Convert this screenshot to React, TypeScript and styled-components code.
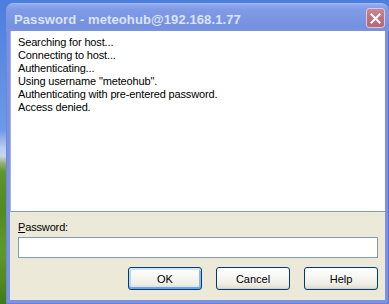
import React from "react";
import styled, { createGlobalStyle } from "styled-components";

const Global = createGlobalStyle`
  html, body { margin: 0; padding: 0; }
  body {
    width: 389px;
    height: 304px;
    overflow: hidden;
    background: linear-gradient(to bottom,
      #4d7edd 0px, #5b8ae2 60px, #6d9ae8 130px, #b9cdee 148px, #c6d6ee 156px,
      #8fae6a 164px, #5f9430 172px, #4f8a22 210px, #5e9a2a 250px, #4a8420 290px, #3f7a18 304px);
    font-family: "Liberation Sans", Tahoma, sans-serif;
  }
`;

const Desktop = styled.div`
  width: 389px;
  height: 304px;
  padding: 3px 0 0 6px;
  box-sizing: border-box;
  display: flex;
`;

const Window = styled.div`
  flex: 1;
  display: flex;
  flex-direction: column;
  background: #7b92e2;
  border-radius: 7px 7px 0 0;
  box-shadow: inset -1px 0 0 #5d73cc, inset 1px 0 0 #6f86dc, inset 0 -1px 0 #6a80d8;
  overflow: hidden;
`;

const TitleBar = styled.div`
  height: 28px;
  flex: none;
  display: flex;
  align-items: flex-start;
  justify-content: space-between;
  padding: 0 4px 0 8px;
  box-sizing: border-box;
  background: linear-gradient(to bottom, #a9bff2 0px, #8ea9ec 2px, #809ce6 6px, #7b96e2 14px, #7590df 24px, #7a94e0 28px);
  border-radius: 7px 7px 0 0;
`;

const Title = styled.span`
  font-family: "Liberation Sans", "DejaVu Sans", sans-serif;
  font-weight: bold;
  font-size: 13px;
  color: #dbe4f8;
  margin-top: 9px;
  line-height: 15px;
  letter-spacing: 0.1px;
`;

const CloseButton = styled.div`
  width: 19px;
  height: 20px;
  margin-top: 5px;
  border-radius: 3px;
  border: 1px solid #e4c6d0;
  box-sizing: border-box;
  background: linear-gradient(to bottom, #c98694, #bb6e7e 60%, #b56877);
  display: flex;
  align-items: center;
  justify-content: center;
`;

const Body = styled.div`
  flex: 1;
  display: flex;
  flex-direction: column;
  margin: 0 4px 4px 4px;
  background: #ece9d8;
`;

const Log = styled.div`
  height: 181px;
  flex: none;
  box-sizing: border-box;
  background: #ffffff;
  border-bottom: 1px solid #7f9db9;
  border-left: 1px solid #a9b8d6;
  padding: 5px 0 0 7px;
  display: flex;
  flex-direction: column;
`;

const LogLine = styled.div`
  font-family: "Liberation Sans", Tahoma, sans-serif;
  font-size: 11px;
  line-height: 13px;
  letter-spacing: -0.15px;
  color: #000;
  white-space: nowrap;
`;

const Form = styled.div`
  flex: 1;
  display: flex;
  flex-direction: column;
  padding: 9px 7px 0 8px;
`;

const Label = styled.label`
  font-size: 11px;
  line-height: 13px;
  letter-spacing: -0.15px;
  color: #000;
  u { text-decoration: underline; text-underline-offset: 1px; }
`;

const Input = styled.input`
  margin-top: 3px;
  height: 21px;
  box-sizing: border-box;
  border: 1px solid #7f9db9;
  background: #fff;
  outline: none;
  padding: 0 3px;
  font-family: "Liberation Sans", sans-serif;
  font-size: 11px;
`;

const Buttons = styled.div`
  display: flex;
  justify-content: flex-end;
  gap: 14px;
  margin-top: 9px;
`;

const Button = styled.button<{ $default?: boolean }>`
  width: 74px;
  height: 23px;
  box-sizing: border-box;
  border: 1px solid #003c74;
  border-radius: 3px;
  background: linear-gradient(to bottom, #ffffff 0%, #f7f7f3 40%, #efeee6 75%, #dedbcf 100%);
  font-family: "Liberation Sans", Tahoma, sans-serif;
  font-size: 11px;
  color: #000;
  padding: 0;
  box-shadow: ${(p) =>
    p.$default
      ? "inset 0 2px 0 #cee7ff, inset 0 -2px 0 #6aa6ef, inset 2px 0 0 #b8d4f6, inset -2px 0 0 #8ab8f0"
      : "inset 0 -1px 0 #d6d0c5"};
`;

const lines = [
  "Searching for host...",
  "Connecting to host...",
  "Authenticating...",
  'Using username "meteohub".',
  "Authenticating with pre-entered password.",
  "Access denied.",
];

export default function App() {
  return (
    <>
      <Global />
      <Desktop>
        <Window>
          <TitleBar>
            <Title>Password - meteohub@192.168.1.77</Title>
            <CloseButton>
              <svg width="11" height="11" viewBox="0 0 11 11">
                <path d="M1.5 1.5 L9.5 9.5 M9.5 1.5 L1.5 9.5" stroke="#ffffff" strokeWidth="2" strokeLinecap="square" />
              </svg>
            </CloseButton>
          </TitleBar>
          <Body>
            <Log>
              {lines.map((l) => (
                <LogLine key={l}>{l}</LogLine>
              ))}
            </Log>
            <Form>
              <Label>
                <u>P</u>assword:
              </Label>
              <Input type="password" />
              <Buttons>
                <Button $default>OK</Button>
                <Button>Cancel</Button>
                <Button>Help</Button>
              </Buttons>
            </Form>
          </Body>
        </Window>
      </Desktop>
    </>
  );
}
